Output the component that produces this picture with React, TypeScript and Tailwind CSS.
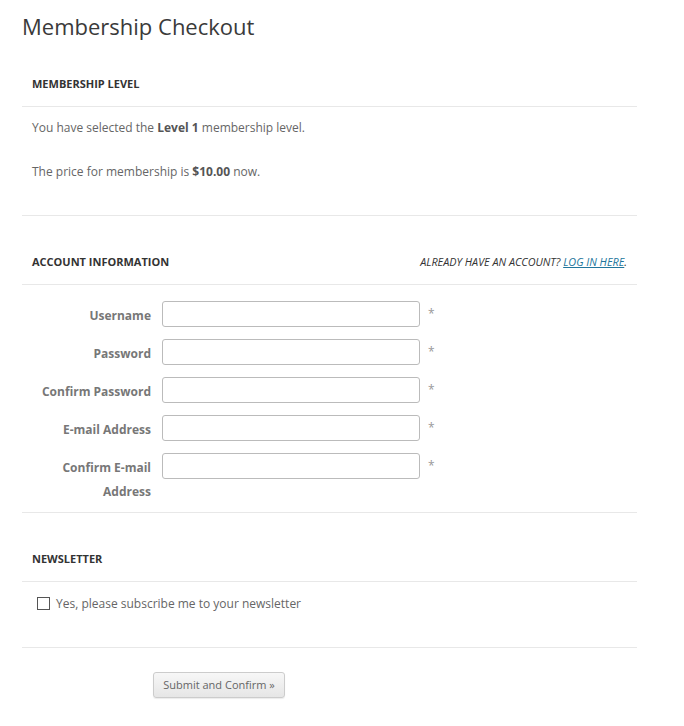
import React from "react";

const fields = [
  { label: "Username", type: "text" },
  { label: "Password", type: "password" },
  { label: "Confirm Password", type: "password" },
  { label: "E-mail Address", type: "email" },
  { label: "Confirm E-mail Address", type: "email" },
];

function SectionHead({ title, right }: { title: string; right?: React.ReactNode }) {
  return (
    <div className="flex h-[44px] items-center justify-between border-b border-[#e8e8e8] px-[10px]">
      <h3 className="text-[11px] font-bold uppercase text-[#333]">{title}</h3>
      {right}
    </div>
  );
}

export default function App() {
  return (
    <div className="min-h-screen bg-white font-['Open_Sans',sans-serif] text-[12px] text-[#666]">
      <div className="w-[615px] ml-[22px] pt-[10px]">
        <h1 className="text-[22px] leading-[32px] text-[#3a3a3a]">Membership Checkout</h1>

        {/* Level */}
        <div className="mt-[21px] border-b border-[#e8e8e8]">
          <SectionHead title="Membership Level" />
          <div className="px-[10px] pt-[11px] pb-[33px] leading-[20px]">
            <p>
              You have selected the <strong className="text-[#555]">Level 1</strong> membership level.
            </p>
            <p className="mt-[24px]">
              The price for membership is <strong className="text-[#555]">$10.00</strong> now.
            </p>
          </div>
        </div>

        {/* Account */}
        <div className="mt-[25px] border-b border-[#e8e8e8]">
          <SectionHead
            title="Account Information"
            right={
              <span className="text-[10.8px] italic uppercase text-[#333]">
                Already have an account?{" "}
                <a href="#" className="text-[#21759b] underline">
                  Log in here
                </a>
                .
              </span>
            }
          />
          <div className="pt-[16px] pb-[8px]">
            {fields.map((f, i) => (
              <div key={f.label} className={`flex items-start ${i < fields.length - 1 ? "h-[38px]" : ""}`}>
                <label className="w-[140px] pr-[11px] pt-[3px] text-right text-[12px] font-bold leading-[24px] text-[#777]">
                  {f.label}
                </label>
                <input
                  type={f.type}
                  className="h-[26px] w-[258px] rounded-[3px] border border-[#bbb] bg-white px-2 text-[12px] outline-none"
                />
                <span className="ml-[8px] pt-[3px] text-[12px] leading-[20px] text-[#999]">*</span>
              </div>
            ))}
          </div>
        </div>

        {/* Newsletter */}
        <div className="mt-[25px] border-b border-[#e8e8e8]">
          <SectionHead title="Newsletter" />
          <label className="flex h-[44px] items-start pt-[15px] pl-[15px] leading-[13px]">
            <span className="mr-[6px] inline-block h-[13px] w-[13px] border border-[#555] bg-white" />
            <span className="text-[12px] text-[#666]">Yes, please subscribe me to your newsletter</span>
          </label>
          <div className="h-[21px]" />
        </div>

        <div className="pt-[24px] pl-[131px]">
          <button className="h-[26px] w-[132px] rounded-[3px] border border-[#ccc] bg-gradient-to-b from-[#f7f7f7] to-[#e6e6e6] text-[11px] text-[#666] shadow-[0_1px_1px_rgba(0,0,0,0.08)]">
            Submit and Confirm »
          </button>
        </div>
      </div>
    </div>
  );
}
